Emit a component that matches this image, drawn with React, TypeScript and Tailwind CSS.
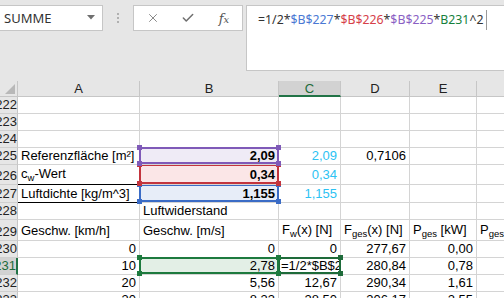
import React from 'react';
import { X, Check } from 'lucide-react';

type CellProps = {
  w: string;
  align?: 'left' | 'right';
  cls?: string;
  children?: React.ReactNode;
  overlay?: React.ReactNode;
  clip?: boolean;
};

function Cell({ w, align = 'left', cls = '', children, overlay, clip }: CellProps) {
  return (
    <div
      className={`relative ${w} shrink-0 h-full border-r border-b border-[#d4d4d4] flex items-end pb-[1px] px-[3px] ${
        align === 'right' ? 'justify-end' : 'justify-start'
      } ${cls}`}
    >
      <span className={`whitespace-nowrap leading-[15px] ${clip ? 'overflow-hidden w-[59px] shrink-0' : ''}`}>{children}</span>
      {overlay}
    </div>
  );
}

function Box({ color }: { color: 'purple' | 'red' | 'blue' | 'green' | 'dark' }) {
  const border =
    color === 'purple'
      ? 'border-[#7f5ab8]'
      : color === 'red'
      ? 'border-[#c3343d]'
      : color === 'blue'
      ? 'border-[#3b6cc6]'
      : color === 'green'
      ? 'border-[#1d7a3e]'
      : 'border-[#1e6b3a]';
  const handle =
    color === 'purple'
      ? 'bg-[#7f5ab8]'
      : color === 'red'
      ? 'bg-[#c3343d]'
      : color === 'blue'
      ? 'bg-[#3b6cc6]'
      : color === 'green'
      ? 'bg-[#1d7a3e]'
      : 'bg-[#1e6b3a]';
  return (
    <div className={`pointer-events-none absolute -left-[1px] -top-[1px] right-[-1px] -bottom-[0px] border-2 ${border}`}>
      <div className={`absolute -left-[4px] -top-[4px] w-[5px] h-[5px] ${handle}`} />
      <div className={`absolute -right-[4px] -top-[4px] w-[5px] h-[5px] ${handle}`} />
      <div className={`absolute -left-[4px] -bottom-[4px] w-[5px] h-[5px] ${handle}`} />
      <div className={`absolute -right-[4px] -bottom-[4px] w-[5px] h-[5px] ${handle}`} />
    </div>
  );
}

function RowHead({ n, active }: { n: string; active?: boolean }) {
  return (
    <div
      className={`w-[18px] shrink-0 h-full overflow-hidden flex items-end justify-end pb-[1px] border-b border-[#cfcfcf] ${
        active
          ? 'bg-[#d2d2d2] text-[#1d6b3a] border-r-2 border-r-[#217346]'
          : 'bg-[#e6e6e6] text-[#222] border-r border-r-[#c6c6c6]'
      }`}
    >
      <span className="leading-[15px] whitespace-nowrap">{n}</span>
    </div>
  );
}

const Sub = ({ children }: { children: React.ReactNode }) => (
  <span className="text-[9.5px] relative top-[3px]">{children}</span>
);

const CY = 'text-[#2cc2f3]';

export default function App() {
  return (
    <div className="w-[504px] h-[298px] overflow-hidden bg-white font-['Liberation_Sans',Arial,sans-serif] text-[13px] text-black">
      {/* Top bar */}
      <div className="h-[81px] bg-[#e6e6e6] flex items-start pt-[5px]">
        <div className="w-[103px] h-[26px] shrink-0 bg-white border-y border-r border-[#c6c6c6] flex items-center justify-between pl-[4px] pr-[7px] font-['Noto_Sans',sans-serif] text-[13px] text-[#333]">
          <span className="leading-none">SUMME</span>
          <svg width="8" height="5" viewBox="0 0 8 5" className="mb-[2px]">
            <path d="M0 0 L8 0 L4 4.5 Z" fill="#6f6f6f" />
          </svg>
        </div>
        <div className="w-[30px] h-[26px] shrink-0 flex flex-col items-center justify-center gap-[2px]">
          <div className="w-[2px] h-[2px] bg-[#b0b0b0]" />
          <div className="w-[2px] h-[2px] bg-[#b0b0b0]" />
          <div className="w-[2px] h-[2px] bg-[#b0b0b0]" />
        </div>
        <div className="w-[110px] h-[26px] shrink-0 bg-white border border-[#c6c6c6] flex items-center text-[#6f6f6f]">
          <div className="w-[36px] flex justify-center pl-[1px]">
            <X size={14} strokeWidth={1.4} />
          </div>
          <div className="w-[36px] flex justify-center">
            <Check size={14} strokeWidth={2.6} />
          </div>
          <div className="w-[36px] flex justify-center items-baseline font-['DejaVu_Serif',serif] italic text-[#555]">
            <span className="text-[13px] leading-none">f</span>
            <span className="text-[10px] leading-none">x</span>
          </div>
        </div>
        <div className="w-[3px] shrink-0" />
        <div className="flex-1 h-[66px] bg-white border-y border-l border-[#c6c6c6] pl-[11px] pt-[5px] flex items-start font-['Noto_Sans',sans-serif] text-[12.3px] text-[#333]">
          <span className="leading-[18px] whitespace-nowrap">
            =1/2*<span className="text-[#4a78d4]">$B$227</span>*<span className="text-[#d6404a]">$B$226</span>*
            <span className="text-[#8a5fc4]">$B$225</span>*<span className="text-[#16803c]">B231</span>^2
          </span>
          <div className="w-[1px] h-[20px] bg-[#9a9a9a] ml-[2px] mt-[-1px]" />
        </div>
      </div>

      {/* Column headers */}
      <div className="flex h-[16px] bg-[#e6e6e6] text-[#222]">
        <div className="relative w-[18px] shrink-0 h-full border-r border-b border-[#c6c6c6]">
          <svg width="10" height="10" viewBox="0 0 10 10" className="absolute right-[2px] bottom-[2px]">
            <path d="M10 0 L10 10 L0 10 Z" fill="#b8b8b8" />
          </svg>
        </div>
        <div className="w-[122px] shrink-0 h-full border-r border-b border-[#c6c6c6] flex items-center justify-center leading-none">A</div>
        <div className="w-[139px] shrink-0 h-full border-r border-b border-[#c6c6c6] flex items-center justify-center leading-none">B</div>
        <div className="w-[62px] shrink-0 h-full border-r border-r-[#c6c6c6] border-b-2 border-b-[#217346] bg-[#d2d2d2] text-[#1d6b3a] flex items-center justify-center leading-none pt-[1px]">C</div>
        <div className="w-[69px] shrink-0 h-full border-r border-b border-[#c6c6c6] flex items-center justify-center leading-none">D</div>
        <div className="w-[67px] shrink-0 h-full border-r border-b border-[#c6c6c6] flex items-center justify-center leading-none">E</div>
        <div className="w-[60px] shrink-0 h-full border-r border-b border-[#c6c6c6]" />
      </div>

      {/* Rows */}
      {['222', '223', '224'].map((n) => (
        <div key={n} className="flex h-[17px]">
          <RowHead n={n} />
          <Cell w="w-[122px]" />
          <Cell w="w-[139px]" />
          <Cell w="w-[62px]" />
          <Cell w="w-[69px]" />
          <Cell w="w-[67px]" />
          <Cell w="w-[60px]" />
        </div>
      ))}

      <div className="flex h-[17px]">
        <RowHead n="225" />
        <Cell w="w-[122px]">Referenzfläche [m²]</Cell>
        <Cell w="w-[139px]" align="right" cls="font-bold bg-[#efebf6] z-[3]" overlay={<Box color="purple" />}>
          2,09
        </Cell>
        <Cell w="w-[62px]" align="right" cls={CY}>2,09</Cell>
        <Cell w="w-[69px]" align="right">0,7106</Cell>
        <Cell w="w-[67px]" />
        <Cell w="w-[60px]" />
      </div>

      <div className="flex h-[20px]">
        <RowHead n="226" />
        <Cell w="w-[122px]" cls="border-b-black pb-[2px]">
          c<Sub>w</Sub>-Wert
        </Cell>
        <Cell w="w-[139px]" align="right" cls="font-bold bg-[#fbe6e7] z-[2] pb-[2px]" overlay={<Box color="red" />}>
          0,34
        </Cell>
        <Cell w="w-[62px]" align="right" cls={`${CY} pb-[2px]`}>0,34</Cell>
        <Cell w="w-[69px]" />
        <Cell w="w-[67px]" />
        <Cell w="w-[60px]" />
      </div>

      <div className="flex h-[18px]">
        <RowHead n="227" />
        <Cell w="w-[122px]" cls="border-b-black">Luftdichte [kg/m^3]</Cell>
        <Cell w="w-[139px]" align="right" cls="font-bold bg-[#e7edf8] z-[1]" overlay={<Box color="blue" />}>
          1,155
        </Cell>
        <Cell w="w-[62px]" align="right" cls={CY}>1,155</Cell>
        <Cell w="w-[69px]" />
        <Cell w="w-[67px]" />
        <Cell w="w-[60px]" />
      </div>

      <div className="flex h-[17px]">
        <RowHead n="228" />
        <Cell w="w-[122px]" />
        <Cell w="w-[139px]">Luftwiderstand</Cell>
        <Cell w="w-[62px]" />
        <Cell w="w-[69px]" />
        <Cell w="w-[67px]" />
        <Cell w="w-[60px]" />
      </div>

      <div className="flex h-[21px]">
        <RowHead n="229" />
        <Cell w="w-[122px]" cls="pb-[2px]">Geschw. [km/h]</Cell>
        <Cell w="w-[139px]" cls="pb-[2px]">Geschw. [m/s]</Cell>
        <Cell w="w-[62px]" cls="pb-[2px]">
          F<Sub>w</Sub>(x) [N]
        </Cell>
        <Cell w="w-[69px]" cls="pb-[2px]">
          F<Sub>ges</Sub>(x) [N]
        </Cell>
        <Cell w="w-[67px]" cls="pb-[2px]">
          P<Sub>ges</Sub> [kW]
        </Cell>
        <Cell w="w-[60px]" cls="pb-[2px]">
          P<Sub>ges</Sub>
        </Cell>
      </div>

      <div className="flex h-[17px]">
        <RowHead n="230" />
        <Cell w="w-[122px]" align="right">0</Cell>
        <Cell w="w-[139px]" align="right">0</Cell>
        <Cell w="w-[62px]" align="right">0</Cell>
        <Cell w="w-[69px]" align="right">277,67</Cell>
        <Cell w="w-[67px]" align="right">0,00</Cell>
        <Cell w="w-[60px]" />
      </div>

      <div className="flex h-[17px]">
        <RowHead n="231" active />
        <Cell w="w-[122px]" align="right">10</Cell>
        <Cell w="w-[139px]" align="right" cls="bg-[#e3efe6] z-[2]" overlay={<Box color="green" />}>
          2,78
        </Cell>
        <Cell w="w-[62px]" clip cls="z-[1] pl-[2px] pr-0" overlay={<Box color="dark" />}>
          =1/2*$B$227
        </Cell>
        <Cell w="w-[69px]" align="right">280,84</Cell>
        <Cell w="w-[67px]" align="right">0,78</Cell>
        <Cell w="w-[60px]" />
      </div>

      <div className="flex h-[17px]">
        <RowHead n="232" />
        <Cell w="w-[122px]" align="right">20</Cell>
        <Cell w="w-[139px]" align="right">5,56</Cell>
        <Cell w="w-[62px]" align="right">12,67</Cell>
        <Cell w="w-[69px]" align="right">290,34</Cell>
        <Cell w="w-[67px]" align="right">1,61</Cell>
        <Cell w="w-[60px]" />
      </div>

      <div className="flex h-[17px]">
        <RowHead n="233" />
        <Cell w="w-[122px]" align="right">30</Cell>
        <Cell w="w-[139px]" align="right">8,33</Cell>
        <Cell w="w-[62px]" align="right">28,50</Cell>
        <Cell w="w-[69px]" align="right">306,17</Cell>
        <Cell w="w-[67px]" align="right">2,55</Cell>
        <Cell w="w-[60px]" />
      </div>
    </div>
  );
}
